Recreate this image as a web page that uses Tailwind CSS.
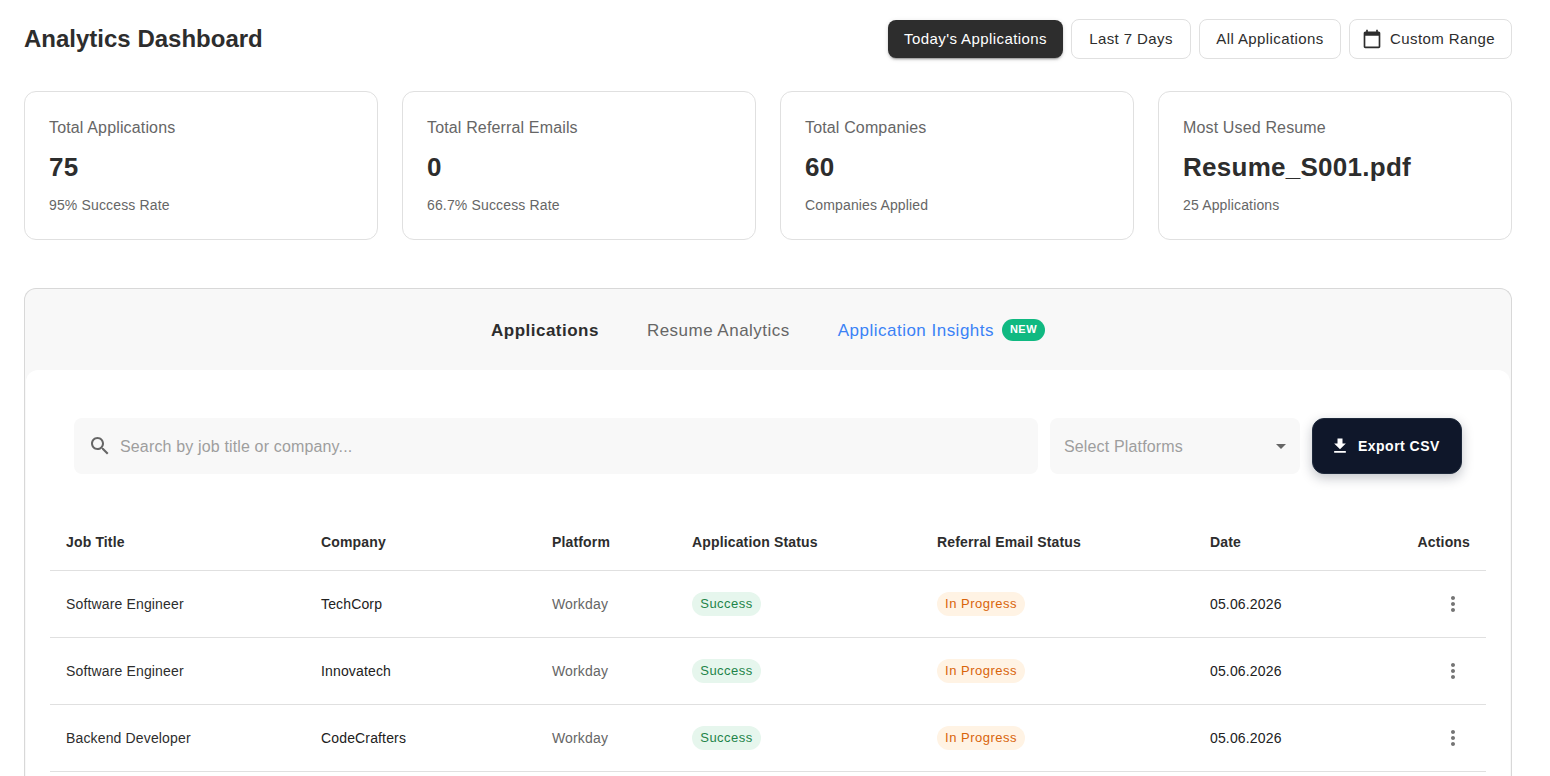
<!DOCTYPE html>
<html lang="en">
<head>
  <meta charset="UTF-8" />
  <meta name="viewport" content="width=device-width, initial-scale=1.0" />
  <title>Analytics Dashboard</title>
  <script src="https://cdn.jsdelivr.net/npm/@tailwindcss/browser@4"></script>
</head>
<body class="bg-white font-['Liberation_Sans',Arial,sans-serif] text-[#2d2d2d]">
  <main class="flex h-screen w-[1536px] flex-col overflow-hidden px-6 pt-[19px]">
    <header class="flex h-10 shrink-0 items-center justify-between mb-8">
      <h1 class="text-2xl font-bold">Analytics Dashboard</h1>
      <div class="flex items-center gap-2 text-[15px] tracking-[0.41px]">
        <button class="h-[38px] w-[175px] rounded-lg bg-[#2d2d2d] text-white shadow-[0_3px_1px_-2px_rgba(0,0,0,0.2),0_2px_2px_rgba(0,0,0,0.14),0_1px_5px_rgba(0,0,0,0.12)]">Today's Applications</button>
        <button class="h-10 w-[120px] rounded-lg border border-[#e0e0e0]">Last 7 Days</button>
        <button class="h-10 w-[142px] rounded-lg border border-[#e0e0e0]">All Applications</button>
        <button class="flex h-10 w-[163px] items-center gap-2 rounded-lg border border-[#e0e0e0] pl-3">
          <svg class="size-5" viewBox="0 0 24 24" fill="currentColor"><path d="M20 3h-1V1h-2v2H7V1H5v2H4c-1.1 0-2 .9-2 2v16c0 1.1.9 2 2 2h16c1.1 0 2-.9 2-2V5c0-1.1-.9-2-2-2zm0 18H4V8h16v13z"/></svg>
          Custom Range
        </button>
      </div>
    </header>

    <section class="grid shrink-0 grid-cols-4 gap-6 mb-12">
      <div class="h-[149px] rounded-xl border border-[#e0e0e0] p-6 text-[#666]">
        <p class="text-base tracking-[0.15px] mb-2">Total Applications</p>
        <p class="text-[26px] leading-[39px] font-bold tracking-[0.27px] text-[#2d2d2d] mb-2">75</p>
        <p class="text-sm tracking-[0.15px]">95% Success Rate</p>
      </div>
      <div class="h-[149px] rounded-xl border border-[#e0e0e0] p-6 text-[#666]">
        <p class="text-base tracking-[0.15px] mb-2">Total Referral Emails</p>
        <p class="text-[26px] leading-[39px] font-bold tracking-[0.27px] text-[#2d2d2d] mb-2">0</p>
        <p class="text-sm tracking-[0.15px]">66.7% Success Rate</p>
      </div>
      <div class="h-[149px] rounded-xl border border-[#e0e0e0] p-6 text-[#666]">
        <p class="text-base tracking-[0.15px] mb-2">Total Companies</p>
        <p class="text-[26px] leading-[39px] font-bold tracking-[0.27px] text-[#2d2d2d] mb-2">60</p>
        <p class="text-sm tracking-[0.15px]">Companies Applied</p>
      </div>
      <div class="h-[149px] rounded-xl border border-[#e0e0e0] p-6 text-[#666]">
        <p class="text-base tracking-[0.15px] mb-2">Most Used Resume</p>
        <p class="text-[26px] leading-[39px] font-bold tracking-[0.27px] text-[#2d2d2d] mb-2">Resume_S001.pdf</p>
        <p class="text-sm tracking-[0.15px]">25 Applications</p>
      </div>
    </section>

    <section class="flex min-h-0 flex-1 flex-col rounded-t-xl border border-b-0 border-[#d8d8d8] bg-[#f8f8f8] px-px">
      <nav class="flex h-[81px] shrink-0 items-center justify-center gap-12 text-[17px] tracking-[0.486px]">
        <a class="pt-0.5 font-bold">Applications</a>
        <a class="pt-0.5 text-[#666]">Resume Analytics</a>
        <a class="flex items-center gap-2 text-[#3b82f6]">
          <span class="pt-0.5">Application Insights</span>
          <span class="flex h-[22px] w-[43px] items-center justify-center rounded-full bg-[#10b981] text-[11px] font-bold tracking-[0.5px] text-white">NEW</span>
        </a>
      </nav>

      <div class="min-h-0 flex-1 rounded-t-xl bg-white px-6 pt-12">
        <div class="flex gap-3 px-6 mb-10">
          <div class="flex h-14 w-[964px] items-center gap-2 rounded-lg bg-[#f8f8f8] pl-3.5 text-base tracking-[0.15px] text-[#9e9e9e]">
            <svg class="size-6 text-[#666]" viewBox="0 0 24 24" fill="currentColor"><path d="M15.5 14h-.79l-.28-.27C15.41 12.59 16 11.11 16 9.5 16 5.91 13.09 3 9.5 3S3 5.91 3 9.5 5.91 16 9.5 16c1.61 0 3.09-.59 4.23-1.57l.27.28v.79l5 4.99L20.49 19l-4.99-5zm-6 0C7.01 14 5 11.99 5 9.5S7.01 5 9.5 5 14 7.01 14 9.5 11.99 14 9.5 14z"/></svg>
            <span class="pt-0.5">Search by job title or company...</span>
          </div>
          <div class="flex h-14 w-[250px] items-center justify-between rounded-lg bg-[#f8f8f8] pl-3.5 pr-[7px] text-base tracking-[0.15px] text-[#9e9e9e]">
            <span class="pt-0.5">Select Platforms</span>
            <svg class="size-6 text-[#666]" viewBox="0 0 24 24" fill="currentColor"><path d="M7 10l5 5 5-5z"/></svg>
          </div>
          <button class="flex h-14 w-[150px] items-center gap-2 rounded-xl border border-[#1e293b] bg-[#0f172a] pl-[17px] text-sm font-bold tracking-[0.48px] text-white shadow-[0_4px_12px_rgba(15,23,42,0.25)]">
            <svg class="size-5" viewBox="0 0 24 24" fill="currentColor"><path d="M19 9h-4V3H9v6H5l7 7 7-7zM5 18v2h14v-2H5z"/></svg>
            Export CSV
          </button>
        </div>

        <table class="w-[1436px] table-fixed text-left text-sm tracking-[0.15px]">
          <colgroup>
            <col class="w-[255px]" /><col class="w-[231px]" /><col class="w-[140px]" /><col class="w-[245px]" /><col class="w-[273px]" /><col class="w-[159px]" /><col class="w-[133px]" />
          </colgroup>
          <thead>
            <tr class="h-[56px] border-b border-[#e0e0e0]">
              <th class="px-4 pt-px">Job Title</th>
              <th class="px-4 pt-px">Company</th>
              <th class="px-4 pt-px">Platform</th>
              <th class="px-4 pt-px">Application Status</th>
              <th class="px-4 pt-px">Referral Email Status</th>
              <th class="px-4 pt-px">Date</th>
              <th class="px-4 pt-px text-right">Actions</th>
            </tr>
          </thead>
          <tbody id="rows"></tbody>
        </table>
      </div>
    </section>
  </main>

  <script>
    const applications = [
      { title: "Software Engineer", company: "TechCorp" },
      { title: "Software Engineer", company: "Innovatech" },
      { title: "Backend Developer", company: "CodeCrafters" }
    ];

    const rows = document.getElementById("rows");
    applications.forEach(item => {
      const tr = document.createElement("tr");
      tr.className = "h-[67px] border-b border-[#e0e0e0]";
      tr.innerHTML = `
        <td class="px-4">${item.title}</td>
        <td class="px-4 text-[#212121]">${item.company}</td>
        <td class="px-4 text-[#666]">Workday</td>
        <td class="px-4"><span class="flex h-6 w-[69px] items-center justify-center rounded-full bg-[#e6f6ed] text-[13px] leading-5 tracking-[0.48px] text-[#1e8449]">Success</span></td>
        <td class="px-4"><span class="flex h-6 w-[88px] items-center justify-center rounded-full bg-[#fff3e4] text-[13px] leading-5 tracking-[0.48px] text-[#d9640b]">In Progress</span></td>
        <td class="px-4 text-[#212121]">05.06.2026</td>
        <td class="px-4"><button class="ml-auto flex size-[34px] items-center justify-center text-[#757575]">
          <svg class="size-6" viewBox="0 0 24 24" fill="currentColor"><path d="M12 8c1.1 0 2-.9 2-2s-.9-2-2-2-2 .9-2 2 .9 2 2 2zm0 2c-1.1 0-2 .9-2 2s.9 2 2 2 2-.9 2-2-.9-2-2-2zm0 6c-1.1 0-2 .9-2 2s.9 2 2 2 2-.9 2-2-.9-2-2-2z"/></svg>
        </button></td>
      `;
      rows.appendChild(tr);
    });
  </script>
</body>
</html>
